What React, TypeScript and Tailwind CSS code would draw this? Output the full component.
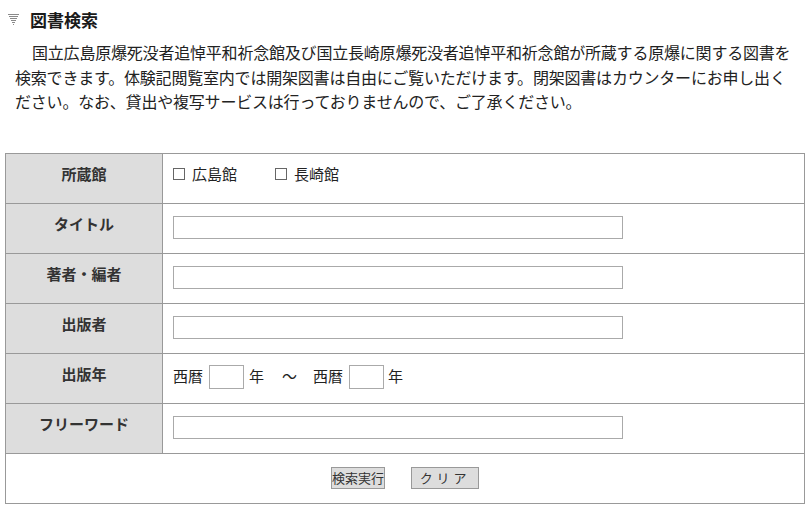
import React from "react";

const labelCls = "w-[157px] shrink-0 bg-[#dddddd] border-r border-[#999] pt-[10px] text-center text-[15px] leading-[20px] font-bold text-[#333]";

const Row = ({ label, children, last }: { label: string; children: React.ReactNode; last?: boolean }) => (
  <div className={"flex h-[50px] " + (last ? "" : "border-b border-[#999]")}>
    <div className={labelCls}>{label}</div>
    <div className="flex-1 pl-[10px]">{children}</div>
  </div>
);

const TextInput = () => (
  <div className="pt-[12px]">
    <input type="text" className="block w-[450px] h-[23px] border border-[#aaa] bg-white outline-none" />
  </div>
);

const Check = ({ label, className }: { label: string; className?: string }) => (
  <label className={"flex items-center " + (className ?? "")}>
    <span className="inline-block w-[12px] h-[12px] border border-[#666] bg-white" />
    <span className="ml-[7px]">{label}</span>
  </label>
);

// heading marker: down-pointing triangle drawn as stacked lines
const Marker = () => (
  <svg width="11" height="12" viewBox="0 0 11 12" className="shrink-0">
    <g stroke="#8a8a8a" strokeWidth="1">
      <line x1="0" y1="0.5" x2="11" y2="0.5" />
      <line x1="1" y1="2.5" x2="10" y2="2.5" />
      <line x1="2" y1="4.5" x2="9" y2="4.5" />
      <line x1="3" y1="6.5" x2="8" y2="6.5" />
      <line x1="4" y1="8.5" x2="7" y2="8.5" />
      <line x1="5" y1="10.5" x2="6" y2="10.5" />
    </g>
  </svg>
);

export default function App() {
  return (
    <div className="w-[812px] h-[526px] bg-white text-[#222] font-['Noto_Sans_CJK_JP','Noto_Sans',sans-serif]">
      <div className="flex items-center pl-[8px] pt-[8px] h-[32px]">
        <Marker />
        <h1 className="ml-[11px] text-[17px] leading-[24px] font-bold text-[#1a1a1a]">図書検索</h1>
      </div>
      <p className="mt-[8px] ml-[15px] w-[780px] text-[16px] leading-[24.5px] tracking-[-0.2px] indent-[17px] text-[#222]">
        国立広島原爆死没者追悼平和祈念館及び国立長崎原爆死没者追悼平和祈念館が所蔵する原爆に関する図書を検索できます。体験記閲覧室内では開架図書は自由にご覧いただけます。閉架図書はカウンターにお申し出ください。なお、貸出や複写サービスは行っておりませんので、ご了承ください。
      </p>

      <div className="mt-[39px] ml-[5px] w-[800px] border border-[#999] text-[15px] text-[#222]">
        <Row label="所蔵館">
          <div className="flex items-center pt-[10px] leading-[20px]">
            <Check label="広島館" />
            <Check label="長崎館" className="ml-[38px]" />
          </div>
        </Row>
        <Row label="タイトル">
          <TextInput />
        </Row>
        <Row label="著者・編者">
          <TextInput />
        </Row>
        <Row label="出版者">
          <TextInput />
        </Row>
        <Row label="出版年">
          <div className="flex items-center pt-[11px] h-[35px]">
            <span>西暦</span>
            <input type="text" className="ml-[6px] w-[35px] h-[24px] border border-[#aaa] outline-none" />
            <span className="ml-[5px]">年</span>
            <span className="ml-[18px]">〜</span>
            <span className="ml-[16px]">西暦</span>
            <input type="text" className="ml-[6px] w-[35px] h-[24px] border border-[#aaa] outline-none" />
            <span className="ml-[4px]">年</span>
          </div>
        </Row>
        <Row label="フリーワード">
          <TextInput />
        </Row>
        <div className="flex h-[49px] items-center justify-center gap-[26px]">
          <button className="h-[22px] w-[54px] border border-[#999] bg-[#dddddd] text-[13px] leading-[20px] text-[#333]">
            検索実行
          </button>
          <button className="h-[22px] w-[68px] border border-[#999] bg-[#dddddd] text-[13px] leading-[20px] tracking-[0.3em] text-[#333]">
            クリア
          </button>
        </div>
      </div>
    </div>
  );
}
